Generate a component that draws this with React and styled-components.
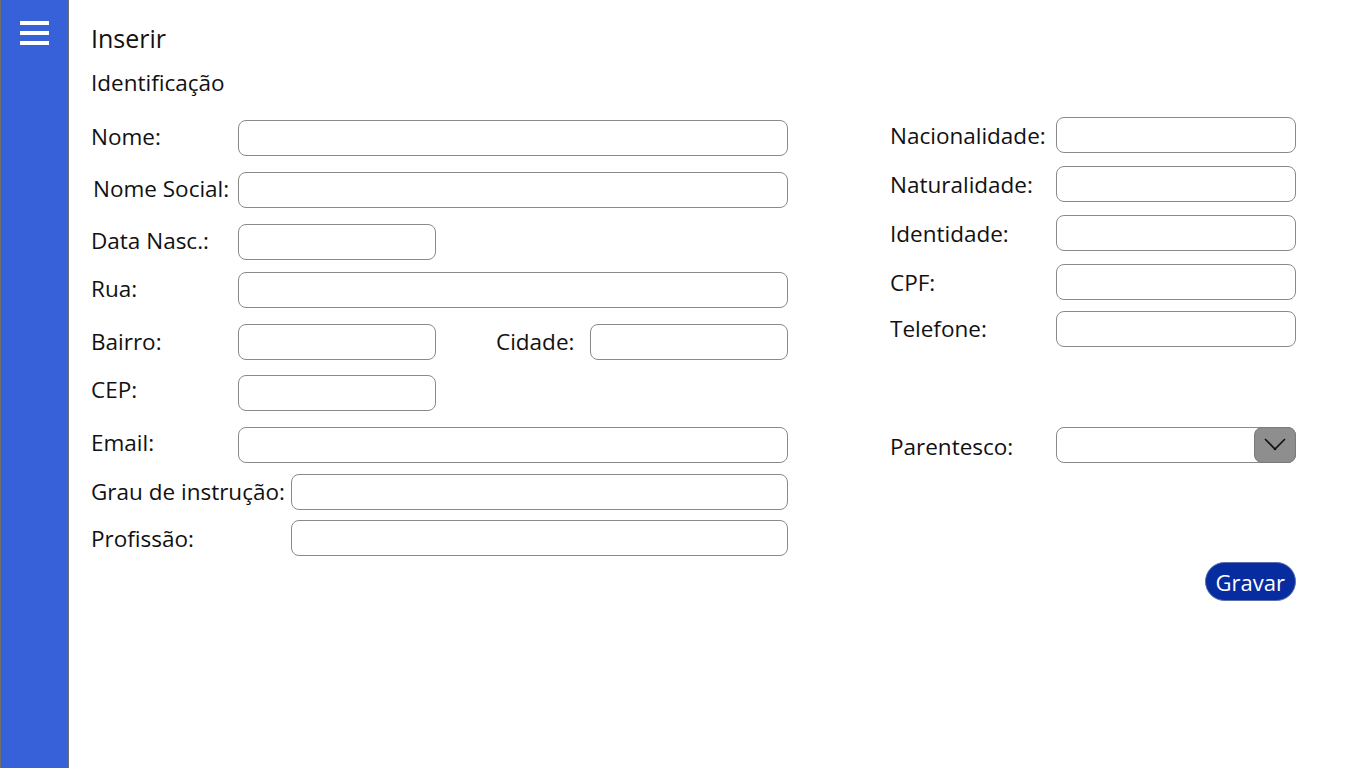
import React from "react"
import styled, { createGlobalStyle } from "styled-components"

const GlobalStyle = createGlobalStyle`
  html, body {
    margin: 0;
    padding: 0;
    background: #ffffff;
    font-family: "Open Sans", "Noto Sans", sans-serif;
    color: #111111;
  }
`

const Page = styled.div`
  display: flex;
  width: 1366px;
  height: 768px;
  overflow: hidden;
`

const Sidebar = styled.aside`
  width: 69px;
  flex: none;
  box-sizing: border-box;
  background-color: #3761d8;
  border-left: 1px solid #6e6e6e;
  border-right: 1px solid #6e6e6e;
  display: flex;
  justify-content: center;
  padding-top: 21px;
`

const MenuButton = styled.button`
  width: 29px;
  height: 24px;
  padding: 0;
  border: 0;
  background: none;
  display: flex;
  flex-direction: column;
  justify-content: space-between;
  cursor: pointer;
`

const MenuBar = styled.span`
  display: block;
  height: 4px;
  background: #ffffff;
`

const Main = styled.main`
  flex: 1;
  padding: 20px 70px 0 22px;
`

const Title = styled.h1`
  margin: 0;
  font-size: 25px;
  font-weight: 400;
  line-height: 36px;
`

const Section = styled.h2`
  margin: 13px 0 0;
  font-size: 22.5px;
  font-weight: 400;
  line-height: 28px;
`

const Form = styled.form`
  display: grid;
  grid-template-columns: 697px 1fr;
  column-gap: 102px;
  margin-top: 20px;
`

const Column = styled.div`
  display: flex;
  flex-direction: column;
  margin-top: ${(p) => p.$top || 0}px;
`

const Row = styled.div`
  display: flex;
  align-items: center;
  height: 36px;
  margin-top: ${(p) => p.$gap || 0}px;
`

const Label = styled.label`
  width: ${(p) => p.$width || 147}px;
  flex: none;
  font-size: 22.5px;
  line-height: 26px;
  padding-left: ${(p) => p.$indent || 0}px;
  box-sizing: border-box;
  white-space: nowrap;
  margin-top: ${(p) => p.$shift || 0}px;
`

const Input = styled.input`
  box-sizing: border-box;
  width: ${(p) => (p.$width ? `${p.$width}px` : "auto")};
  flex: ${(p) => (p.$width ? "none" : "1")};
  height: 36px;
  border: 1px solid #8a8a8a;
  border-radius: 8px;
  background: #ffffff;
  font: inherit;
  font-size: 18px;
  padding: 0 10px;
  outline: none;
`

const Spacer = styled.div`
  width: ${(p) => p.$width}px;
  flex: none;
`

const Select = styled.div`
  box-sizing: border-box;
  width: 240px;
  height: 36px;
  border: 1px solid #8a8a8a;
  border-radius: 8px;
  background: #ffffff;
  display: flex;
  justify-content: flex-end;
`

const SelectButton = styled.span`
  width: 42px;
  height: 36px;
  margin: -1px -1px 0 0;
  box-sizing: border-box;
  background: #8e8e8e;
  border: 1px solid #7a7a7a;
  border-radius: 8px;
  display: flex;
  align-items: center;
  justify-content: center;
`

const Actions = styled.div`
  display: flex;
  justify-content: flex-end;
  margin-top: 99px;
`

const SaveButton = styled.button`
  height: 39px;
  padding: 0 10px;
  border: 1px solid #5a6fb0;
  border-radius: 20px;
  background: #072ca0;
  color: #ffffff;
  font-family: inherit;
  font-size: 22px;
  line-height: 1;
  cursor: pointer;
`

const Field = ({ label, labelWidth, indent, shift, width, gap }) => (
  <Row $gap={gap}>
    <Label $width={labelWidth} $indent={indent} $shift={shift}>{label}</Label>
    <Input $width={width} />
  </Row>
)

const App = () => {
  return (
    <Page>
      <GlobalStyle />
      <Sidebar>
        <MenuButton type="button" aria-label="Menu">
          <MenuBar />
          <MenuBar />
          <MenuBar />
        </MenuButton>
      </Sidebar>
      <Main>
        <Title>Inserir</Title>
        <Section>Identificação</Section>
        <Form onSubmit={(e) => e.preventDefault()}>
          <Column $top={3}>
            <Field label="Nome:" shift={-2} />
            <Field label="Nome Social:" indent={2} shift={-2} gap={16} />
            <Field label="Data Nasc.:" width={198} shift={-2} gap={16} />
            <Field label="Rua:" width={550} shift={-3} gap={12} />
            <Row $gap={16}>
              <Label>Bairro:</Label>
              <Input $width={198} />
              <Spacer $width={60} />
              <Label $width={94}>Cidade:</Label>
              <Input $width={198} />
            </Row>
            <Field label="CEP:" width={198} shift={-6} gap={15} />
            <Field label="Email:" shift={-5} gap={16} />
            <Field label="Grau de instrução:" labelWidth={200} gap={11} />
            <Field label="Profissão:" labelWidth={200} shift={2} gap={10} />
          </Column>
          <Column>
            <Field label="Nacionalidade:" labelWidth={166} width={240} shift={1} />
            <Field label="Naturalidade:" labelWidth={166} width={240} gap={13} shift={1} />
            <Field label="Identidade:" labelWidth={166} width={240} gap={13} shift={2} />
            <Field label="CPF:" labelWidth={166} width={240} gap={13} shift={2} />
            <Field label="Telefone:" labelWidth={166} width={240} gap={11} shift={0} />
            <Row $gap={80}>
              <Label $width={166} $shift={3}>Parentesco:</Label>
              <Select>
                <SelectButton>
                  <svg width="28" height="20" viewBox="0 0 28 20">
                    <path d="M4 4 L14 14 L24 4" fill="none" stroke="#111" strokeWidth="1.6" />
                    <circle cx="14" cy="14" r="1.3" fill="#111" />
                  </svg>
                </SelectButton>
              </Select>
            </Row>
            <Actions>
              <SaveButton type="submit">Gravar</SaveButton>
            </Actions>
          </Column>
        </Form>
      </Main>
    </Page>
  )
}

export default App
